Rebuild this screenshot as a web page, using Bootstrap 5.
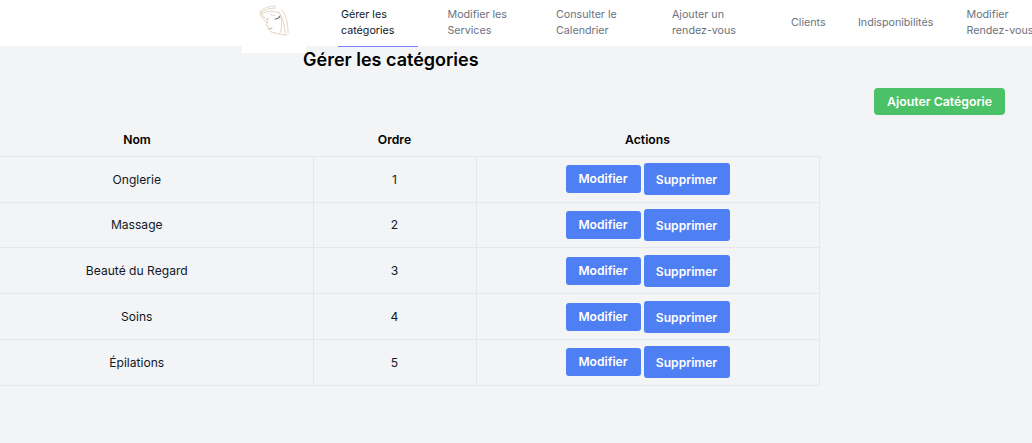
<!doctype html>
<html lang="fr">
<head>
<meta charset="utf-8">
<title>Gérer les catégories</title>
<link href="https://cdn.jsdelivr.net/npm/bootstrap@5.3.0/dist/css/bootstrap.min.css" rel="stylesheet">
<style>
html,body{height:100%;overflow:hidden}
body{background:#f3f4f6;font-family:Inter,"Noto Sans",sans-serif;color:#111827;width:1032px}
.topbar{height:46px;background:#fff;padding-left:242px}
.logo-box{width:64px;height:53px;background:#fff;padding:5px 0 0 16px;flex:none}
.menu{margin-left:32px;flex-wrap:nowrap;white-space:nowrap}
.menu-link{display:flex;align-items:center;height:47px;padding:0 3px 1px;font-size:10.7px;line-height:16px;color:#6b7280;text-decoration:none;border-bottom:1px solid transparent}
.menu-link.on{color:#111827;border-bottom-color:#7c83f7}
.w1{width:80px;margin-right:26.5px}.w2{width:90px;margin-right:18.5px}.w3{width:98px;margin-right:18px}
.w4{width:100px;margin-right:19px}.w5{width:45px;margin-right:22px}.w6{width:90px;margin-right:18.5px}.w7{width:70px}
.page-title{font-size:18px;font-weight:600;line-height:28px;margin:0;color:#000;margin-left:303px}
.add-row{padding-right:27px;margin-top:14px}
.btn-add{background:#4bc267;color:#fff;font-size:12.3px;font-weight:600;border:0;border-radius:4px;height:27px;width:131px;padding:0;line-height:27px}
.btn-add:hover{background:#4bc267;color:#fff}
.cat-table{width:858px;margin:10px 0 0 -39px;border-collapse:collapse;font-size:12.1px;table-layout:fixed;--bs-table-bg:transparent;color:#111827}
.cat-table th{height:31.5px;padding:0;text-align:center;font-weight:600;font-size:12.2px;color:#000;border:0;border-bottom:1px solid #e5e7eb;vertical-align:middle}
.cat-table td{padding:0;text-align:center;vertical-align:middle;border:1px solid #e5e7eb;border-left:0;height:45.72px}
.cat-table td:not(:last-child){padding-top:.7px}
.btn-edit,.btn-del{background:#4f80f3;color:#fff;font-size:12.1px;font-weight:600;border:0;border-radius:3px;padding:0;vertical-align:middle}
.btn-edit:hover,.btn-del:hover{background:#4f80f3;color:#fff}
.btn-edit{width:75px;height:28px;line-height:26px}
.btn-del{width:86px;height:32px;line-height:32px;padding-top:1px;margin-left:3px}
</style>
</head>
<body>
<nav class="topbar d-flex">
  <div class="logo-box">
    <svg width="32" height="34" viewBox="0 0 32 34" fill="none" stroke="#dccbb4" stroke-width=".8" stroke-linecap="round">
      <path d="M2 7C5 3 11 1 17 1"/>
      <path d="M2 9C5 5 11 3 18 3"/>
      <path d="M2 8C3 12 6 16 10 18"/>
      <path d="M3 6C4 11 7 14 10 15"/>
      <path d="M4 9C8 6 14 5 21 8"/>
      <path d="M10 13C9 16 9 18 8 20L10 21L10 24L12 25L13 27L17 28"/>
      <path d="M12 9C14 11 15 11 17 10"/>
      <path d="M24 5C28 10 30 17 30 28"/>
      <path d="M21 7C25 13 27 20 27 30"/>
      <path d="M17 28C21 29 25 30 29 30"/>
      <path d="M23 12C24 18 24 24 22 28"/>
      <path d="M17 14C19 14 21 13 22 11" stroke="#77736c" stroke-width="1.1"/>
      <path d="M11 24L14 23" stroke="#a79a88"/>
    </svg>
  </div>
  <div class="menu d-flex">
    <a class="menu-link on w1" href="#">Gérer les<br>catégories</a>
    <a class="menu-link w2" href="#">Modifier les<br>Services</a>
    <a class="menu-link w3" href="#">Consulter le<br>Calendrier</a>
    <a class="menu-link w4" href="#">Ajouter un<br>rendez-vous</a>
    <a class="menu-link w5" href="#">Clients</a>
    <a class="menu-link w6" href="#">Indisponibilités</a>
    <a class="menu-link w7" href="#">Modifier<br>Rendez-vous</a>
  </div>
</nav>
<main>
  <h1 class="page-title">Gérer les catégories</h1>
  <div class="add-row d-flex justify-content-end">
    <button class="btn btn-add" type="button">Ajouter Catégorie</button>
  </div>
  <table class="table cat-table">
    <colgroup><col style="width:352px"><col style="width:163px"><col style="width:343px"></colgroup>
    <thead><tr><th>Nom</th><th>Ordre</th><th>Actions</th></tr></thead>
    <tbody>
      <tr><td>Onglerie</td><td>1</td><td><button class="btn btn-edit" type="button">Modifier</button><button class="btn btn-del" type="button">Supprimer</button></td></tr>
      <tr><td>Massage</td><td>2</td><td><button class="btn btn-edit" type="button">Modifier</button><button class="btn btn-del" type="button">Supprimer</button></td></tr>
      <tr><td>Beauté du Regard</td><td>3</td><td><button class="btn btn-edit" type="button">Modifier</button><button class="btn btn-del" type="button">Supprimer</button></td></tr>
      <tr><td>Soins</td><td>4</td><td><button class="btn btn-edit" type="button">Modifier</button><button class="btn btn-del" type="button">Supprimer</button></td></tr>
      <tr><td>Épilations</td><td>5</td><td><button class="btn btn-edit" type="button">Modifier</button><button class="btn btn-del" type="button">Supprimer</button></td></tr>
    </tbody>
  </table>
</main>
<script src="https://cdn.jsdelivr.net/npm/bootstrap@5.3.0/dist/js/bootstrap.bundle.min.js"></script>
</body>
</html>
